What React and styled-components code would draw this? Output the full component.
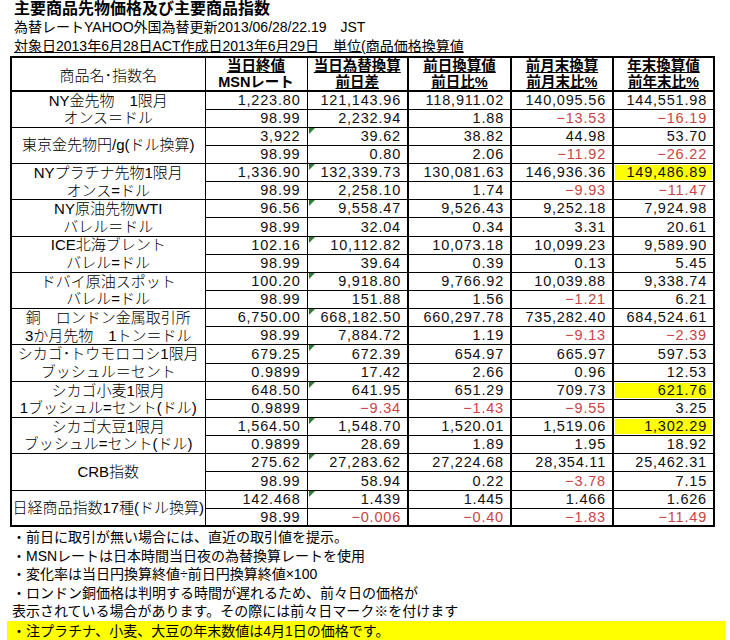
import React from 'react';
import styled, { createGlobalStyle, css } from 'styled-components';

const GlobalStyle = createGlobalStyle`
  body {
    margin: 0;
    background: #ffffff;
    color: #000000;
    font-family: "Liberation Sans", "Noto Sans CJK JP", sans-serif;
  }
`;

const Page = styled.div`
  width: 720px;
  padding-left: 10px;
`;

const Title = styled.div`
  padding-left: 4px;
  font-size: 16px;
  line-height: 18px;
  font-weight: 700;
`;

const InfoLine = styled.div`
  padding-left: 4px;
  font-size: 14px;
  line-height: ${(props) => (props.$underline ? '20px' : '18px')};
  text-decoration: ${(props) => (props.$underline ? 'underline' : 'none')};
  white-space: pre;
`;

const Table = styled.table`
  width: 703px;
  table-layout: fixed;
  border-collapse: collapse;
  border: 2px solid #000;
`;

const HeadRow = styled.tr`
  height: 17px;
`;

const NameHead = styled.th`
  font-weight: 300;
  font-size: 15px;
  border-right: 1px solid #000;
  border-bottom: 2px solid #000;
  text-align: center;
  padding: 0;
`;

const ColHead = styled.th`
  font-size: 14.5px;
  font-weight: 700;
  line-height: 16px;
  padding: 0;
  text-align: center;
  white-space: nowrap;
  text-decoration: ${(props) => (props.$plain ? 'none' : 'underline')};
  border-left: ${(props) => (props.$thick ? '2px' : '1px')} solid #000;
  border-bottom: ${(props) => (props.$last ? '2px solid #000' : 'none')};
`;

const DataRow = styled.tr`
  height: 18.15px;
`;

const NameCell = styled.td`
  font-size: 15px;
  font-weight: 300;
  line-height: 16px;
  padding: 0;
  text-align: center;
  white-space: nowrap;
  border-right: 1px solid #000;
  border-top: ${(props) => (props.$pos === 'bottom' ? 'none' : '1px solid #000')};
  border-bottom: ${(props) => (props.$pos === 'top' ? 'none' : '1px solid #000')};
`;

const NumCell = styled.td`
  position: relative;
  font-size: 14.5px;
  line-height: 15px;
  letter-spacing: 0.8px;
  padding: 0 6px 0 0;
  text-align: right;
  white-space: nowrap;
  border: 1px solid #000;
  border-left-width: ${(props) => (props.$thick ? '2px' : '1px')};
  color: ${(props) => (props.$red ? '#c94444' : '#111')};
  background: ${(props) => (props.$hl ? '#ffff00' : 'transparent')};
  ${(props) =>
    props.$hl &&
    css`
      box-shadow: inset 0 0 0 1px #ffffff;
    `}
  ${(props) =>
    props.$flag &&
    css`
      &::before {
        content: '';
        position: absolute;
        left: 1px;
        top: 0;
        border-top: 6px solid #2e7d32;
        border-right: 6px solid transparent;
      }
    `}
`;

const Notes = styled.div`
  padding-left: 2px;
  padding-top: 1px;
  font-size: 14px;
  line-height: 18.5px;
`;

const NoteLine = styled.div`
  white-space: pre;
`;

const YellowNote = styled.div`
  margin-left: -3px;
  width: 713px;
  background: #ffff00;
  font-size: 14px;
  line-height: 20px;
  padding-left: 5px;
`;

const groups = [
  {
    names: ['NY金先物　1限月', 'オンス＝ドル'],
    rows: [
      ['1,223.80', '121,143.96', '118,911.02', '140,095.56', '144,551.98'],
      ['98.99', '2,232.94', '1.88', '−13.53', '−16.19'],
    ],
  },
  {
    names: ['東京金先物円/g(ドル換算)'],
    flag: true,
    rows: [
      ['3,922', '39.62', '38.82', '44.98', '53.70'],
      ['98.99', '0.80', '2.06', '−11.92', '−26.22'],
    ],
  },
  {
    names: ['NYプラチナ先物1限月', 'オンス=ドル'],
    flag: true,
    hl: true,
    rows: [
      ['1,336.90', '132,339.73', '130,081.63', '146,936.36', '149,486.89'],
      ['98.99', '2,258.10', '1.74', '−9.93', '−11.47'],
    ],
  },
  {
    names: ['NY原油先物WTI', 'バレル＝ドル'],
    flag: true,
    rows: [
      ['96.56', '9,558.47', '9,526.43', '9,252.18', '7,924.98'],
      ['98.99', '32.04', '0.34', '3.31', '20.61'],
    ],
  },
  {
    names: ['ICE北海ブレント', 'バレル=ドル'],
    flag: true,
    rows: [
      ['102.16', '10,112.82', '10,073.18', '10,099.23', '9,589.90'],
      ['98.99', '39.64', '0.39', '0.13', '5.45'],
    ],
  },
  {
    names: ['ドバイ原油スポット', 'バレル=ドル'],
    flag: true,
    rows: [
      ['100.20', '9,918.80', '9,766.92', '10,039.88', '9,338.74'],
      ['98.99', '151.88', '1.56', '−1.21', '6.21'],
    ],
  },
  {
    names: ['銅　ロンドン金属取引所', '3か月先物　1トン＝ドル'],
    flag: true,
    rows: [
      ['6,750.00', '668,182.50', '660,297.78', '735,282.40', '684,524.61'],
      ['98.99', '7,884.72', '1.19', '−9.13', '−2.39'],
    ],
  },
  {
    names: ['シカゴ･トウモロコシ1限月', 'ブッシュル＝セント'],
    flag: true,
    rows: [
      ['679.25', '672.39', '654.97', '665.97', '597.53'],
      ['0.9899', '17.42', '2.66', '0.96', '12.53'],
    ],
  },
  {
    names: ['シカゴ小麦1限月', '1ブッシュル=セント(ドル)'],
    flag: true,
    hl: true,
    rows: [
      ['648.50', '641.95', '651.29', '709.73', '621.76'],
      ['0.9899', '−9.34', '−1.43', '−9.55', '3.25'],
    ],
  },
  {
    names: ['シカゴ大豆1限月', 'ブッシュル=セント(ドル)'],
    flag: true,
    hl: true,
    rows: [
      ['1,564.50', '1,548.70', '1,520.01', '1,519.06', '1,302.29'],
      ['0.9899', '28.69', '1.89', '1.95', '18.92'],
    ],
  },
  {
    names: ['CRB指数'],
    flag: true,
    rows: [
      ['275.62', '27,283.62', '27,224.68', '28,354.11', '25,462.31'],
      ['98.99', '58.94', '0.22', '−3.78', '7.15'],
    ],
  },
  {
    names: ['日経商品指数17種(ドル換算)'],
    flag: true,
    rows: [
      ['142.468', '1.439', '1.445', '1.466', '1.626'],
      ['98.99', '−0.006', '−0.40', '−1.83', '−11.49'],
    ],
  },
];

const headTop = ['当日終値', '当日為替換算', '前日換算値', '前月末換算', '年末換算値'];
const headBottom = ['MSNレート', '前日差', '前日比%', '前月末比%', '前年末比%'];

const notes = [
  '・前日に取引が無い場合には、直近の取引値を提示。',
  '・MSNレートは日本時間当日夜の為替換算レートを使用',
  '・変化率は当日円換算終値÷前日円換算終値×100',
  '・ロンドン銅価格は判明する時間が遅れるため、前々日の価格が',
  '表示されている場合があります。その際には前々日マーク※を付けます',
];

const renderNumbers = (values, group, rowIndex) =>
  values.map((v, i) => (
    <NumCell
      key={i}
      $thick={i >= 2}
      $red={v.startsWith('−')}
      $hl={group.hl && rowIndex === 0 && i === 4}
      $flag={group.flag && rowIndex === 0 && i === 1}
    >
      {v}
    </NumCell>
  ));

const CommodityTable = () => (
  <Table>
    <colgroup>
      <col style={{ width: 194 }} />
      <col style={{ width: 102 }} />
      <col style={{ width: 101 }} />
      <col style={{ width: 103 }} />
      <col style={{ width: 102 }} />
      <col style={{ width: 101 }} />
    </colgroup>
    <thead>
      <HeadRow>
        <NameHead rowSpan={2}>商品名･指数名</NameHead>
        {headTop.map((h, i) => (
          <ColHead key={h} $thick={i >= 2}>
            {h}
          </ColHead>
        ))}
      </HeadRow>
      <HeadRow>
        {headBottom.map((h, i) => (
          <ColHead key={h} $thick={i >= 2} $last $plain={i === 0}>
            {h}
          </ColHead>
        ))}
      </HeadRow>
    </thead>
    <tbody>
      {groups.map((g) => (
        <React.Fragment key={g.names[0]}>
          <DataRow>
            {g.names.length === 1 ? (
              <NameCell rowSpan={2}>{g.names[0]}</NameCell>
            ) : (
              <NameCell $pos="top">{g.names[0]}</NameCell>
            )}
            {renderNumbers(g.rows[0], g, 0)}
          </DataRow>
          <DataRow>
            {g.names.length === 2 && <NameCell $pos="bottom">{g.names[1]}</NameCell>}
            {renderNumbers(g.rows[1], g, 1)}
          </DataRow>
        </React.Fragment>
      ))}
    </tbody>
  </Table>
);

const App = () => {
  return (
    <Page>
      <GlobalStyle />
      <Title>主要商品先物価格及び主要商品指数</Title>
      <InfoLine>為替レートYAHOO外国為替更新2013/06/28/22.19　JST</InfoLine>
      <InfoLine $underline>対象日2013年6月28日ACT作成日2013年6月29日　単位(商品価格換算値</InfoLine>
      <CommodityTable />
      <Notes>
        {notes.map((n) => (
          <NoteLine key={n}>{n}</NoteLine>
        ))}
      </Notes>
      <YellowNote>・注プラチナ、小麦、大豆の年末数値は4月1日の価格です。</YellowNote>
    </Page>
  );
};

export default App;
